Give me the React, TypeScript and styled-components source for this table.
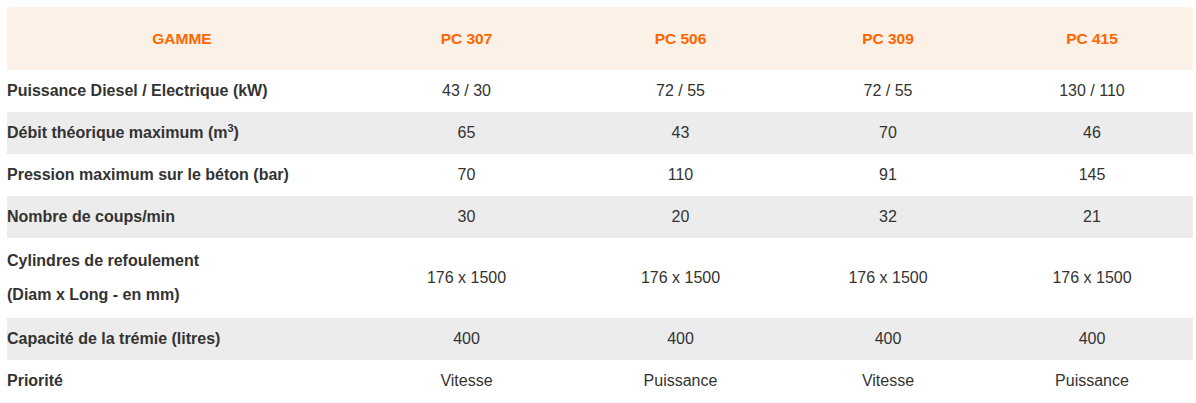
import React from "react";
import styled, { createGlobalStyle } from "styled-components";

const GlobalStyle = createGlobalStyle`
  body {
    margin: 0;
    background: #ffffff;
    font-family: "Liberation Sans", Arial, sans-serif;
  }
`;

const Page = styled.div`
  padding: 7px;
`;

const Table = styled.table`
  width: 1186px;
  border-collapse: collapse;
  table-layout: fixed;
  font-size: 16px;
  color: #333333;
`;

const HeadRow = styled.tr`
  background: #fcf1e6;
  height: 63px;
`;

const HeadCell = styled.th`
  color: #ff6600;
  font-size: 15.5px;
  font-weight: bold;
  text-align: center;
  padding: 0;
`;

const Row = styled.tr<{ $shaded?: boolean; $tall?: boolean }>`
  background: ${(p) => (p.$shaded ? "#ececec" : "#ffffff")};
  height: ${(p) => (p.$tall ? "80px" : "42px")};
`;

const Label = styled.td`
  font-weight: bold;
  text-align: left;
  padding: 0;
  line-height: 34px;
`;

const Value = styled.td`
  text-align: center;
  padding: 0;
`;

const Sup = styled.sup`
  font-size: 11px;
  line-height: 0;
`;

const widths = [350, 219, 209, 206, 202];
const models = ["PC 307", "PC 506", "PC 309", "PC 415"];

type Spec = { label: React.ReactNode; values: string[]; tall?: boolean };

const specs: Spec[] = [
  { label: "Puissance Diesel / Electrique (kW)", values: ["43 / 30", "72 / 55", "72 / 55", "130 / 110"] },
  {
    label: (
      <>
        Débit théorique maximum (m<Sup>3</Sup>)
      </>
    ),
    values: ["65", "43", "70", "46"],
  },
  { label: "Pression maximum sur le béton (bar)", values: ["70", "110", "91", "145"] },
  { label: "Nombre de coups/min", values: ["30", "20", "32", "21"] },
  {
    label: (
      <>
        Cylindres de refoulement
        <br />
        (Diam x Long - en mm)
      </>
    ),
    values: ["176 x 1500", "176 x 1500", "176 x 1500", "176 x 1500"],
    tall: true,
  },
  { label: "Capacité de la trémie (litres)", values: ["400", "400", "400", "400"] },
  { label: "Priorité", values: ["Vitesse", "Puissance", "Vitesse", "Puissance"] },
];

const App: React.FC = () => {
  return (
    <Page>
      <GlobalStyle />
      <Table>
        <colgroup>
          {widths.map((w, i) => (
            <col key={i} style={{ width: w }} />
          ))}
        </colgroup>
        <thead>
          <HeadRow>
            <HeadCell>GAMME</HeadCell>
            {models.map((m) => (
              <HeadCell key={m}>{m}</HeadCell>
            ))}
          </HeadRow>
        </thead>
        <tbody>
          {specs.map((s, i) => (
            <Row key={i} $shaded={i % 2 === 1} $tall={s.tall}>
              <Label>{s.label}</Label>
              {s.values.map((v, j) => (
                <Value key={j}>{v}</Value>
              ))}
            </Row>
          ))}
        </tbody>
      </Table>
    </Page>
  );
};

export default App;
